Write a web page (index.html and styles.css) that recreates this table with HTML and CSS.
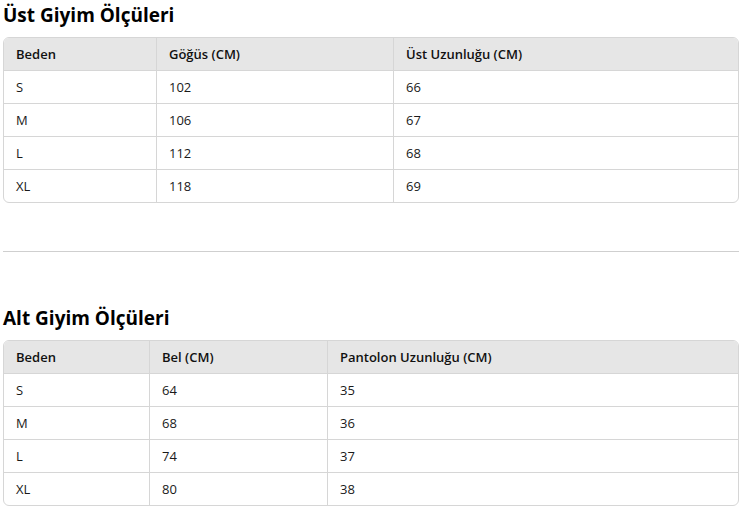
FILE: index.html
```html
<!DOCTYPE html>
<html lang="tr">
<head>
<meta charset="utf-8">
<link rel="stylesheet" href="styles.css">
</head>
<body>
<section class="block">
  <h3 class="title">Üst Giyim Ölçüleri</h3>
  <div class="table-wrap">
    <table class="sizes top">
      <thead>
        <tr><th class="c1">Beden</th><th class="c2">Göğüs (CM)</th><th>Üst Uzunluğu (CM)</th></tr>
      </thead>
      <tbody>
        <tr><td>S</td><td>102</td><td>66</td></tr>
        <tr><td>M</td><td>106</td><td>67</td></tr>
        <tr><td>L</td><td>112</td><td>68</td></tr>
        <tr><td>XL</td><td>118</td><td>69</td></tr>
      </tbody>
    </table>
  </div>
</section>
<hr class="divider">
<section class="block second">
  <h3 class="title">Alt Giyim Ölçüleri</h3>
  <div class="table-wrap">
    <table class="sizes bottom">
      <thead>
        <tr><th class="c1">Beden</th><th class="c2">Bel (CM)</th><th>Pantolon Uzunluğu (CM)</th></tr>
      </thead>
      <tbody>
        <tr><td>S</td><td>64</td><td>35</td></tr>
        <tr><td>M</td><td>68</td><td>36</td></tr>
        <tr><td>L</td><td>74</td><td>37</td></tr>
        <tr><td>XL</td><td>80</td><td>38</td></tr>
      </tbody>
    </table>
  </div>
</section>
</body>
</html>
```
FILE: styles.css
```css
html, body {
  margin: 0;
  padding: 0;
  background: #ffffff;
}
body {
  padding: 0 8px 0 3px;
  font-family: "Open Sans", "Noto Sans", sans-serif;
  color: #1a1a1a;
}
.title {
  margin: 0;
  padding-top: 2px;
  height: 35px;
  font-size: 19px;
  line-height: 26px;
  font-weight: 700;
  color: #000;
}
.table-wrap {
  border: 1px solid #d6d6d6;
  border-radius: 6px;
  overflow: hidden;
  width: 734px;
}
.sizes {
  width: 100%;
  border-collapse: separate;
  border-spacing: 0;
  font-size: 13px;
}
.sizes th, .sizes td {
  text-align: left;
  padding: 0 12px;
  height: 32px;
  line-height: 18px;
  border-right: 1px solid #d6d6d6;
  border-bottom: 1px solid #d6d6d6;
}
.sizes th:last-child, .sizes td:last-child {
  border-right: none;
}
.sizes tbody tr:last-child td {
  border-bottom: none;
}
.sizes th {
  background: #e6e6e6;
  font-weight: 600;
  color: #111;
}
.sizes td {
  color: #1a1a1a;
}
.top .c1 { width: 128px; }
.top .c2 { width: 212px; }
.bottom .c1 { width: 121px; }
.bottom .c2 { width: 153px; }
.divider {
  margin: 48px 0 0 0;
  width: 736px;
  border: none;
  border-top: 1px solid #cfcfcf;
  height: 0;
}
.second {
  margin-top: 51px;
}
```
